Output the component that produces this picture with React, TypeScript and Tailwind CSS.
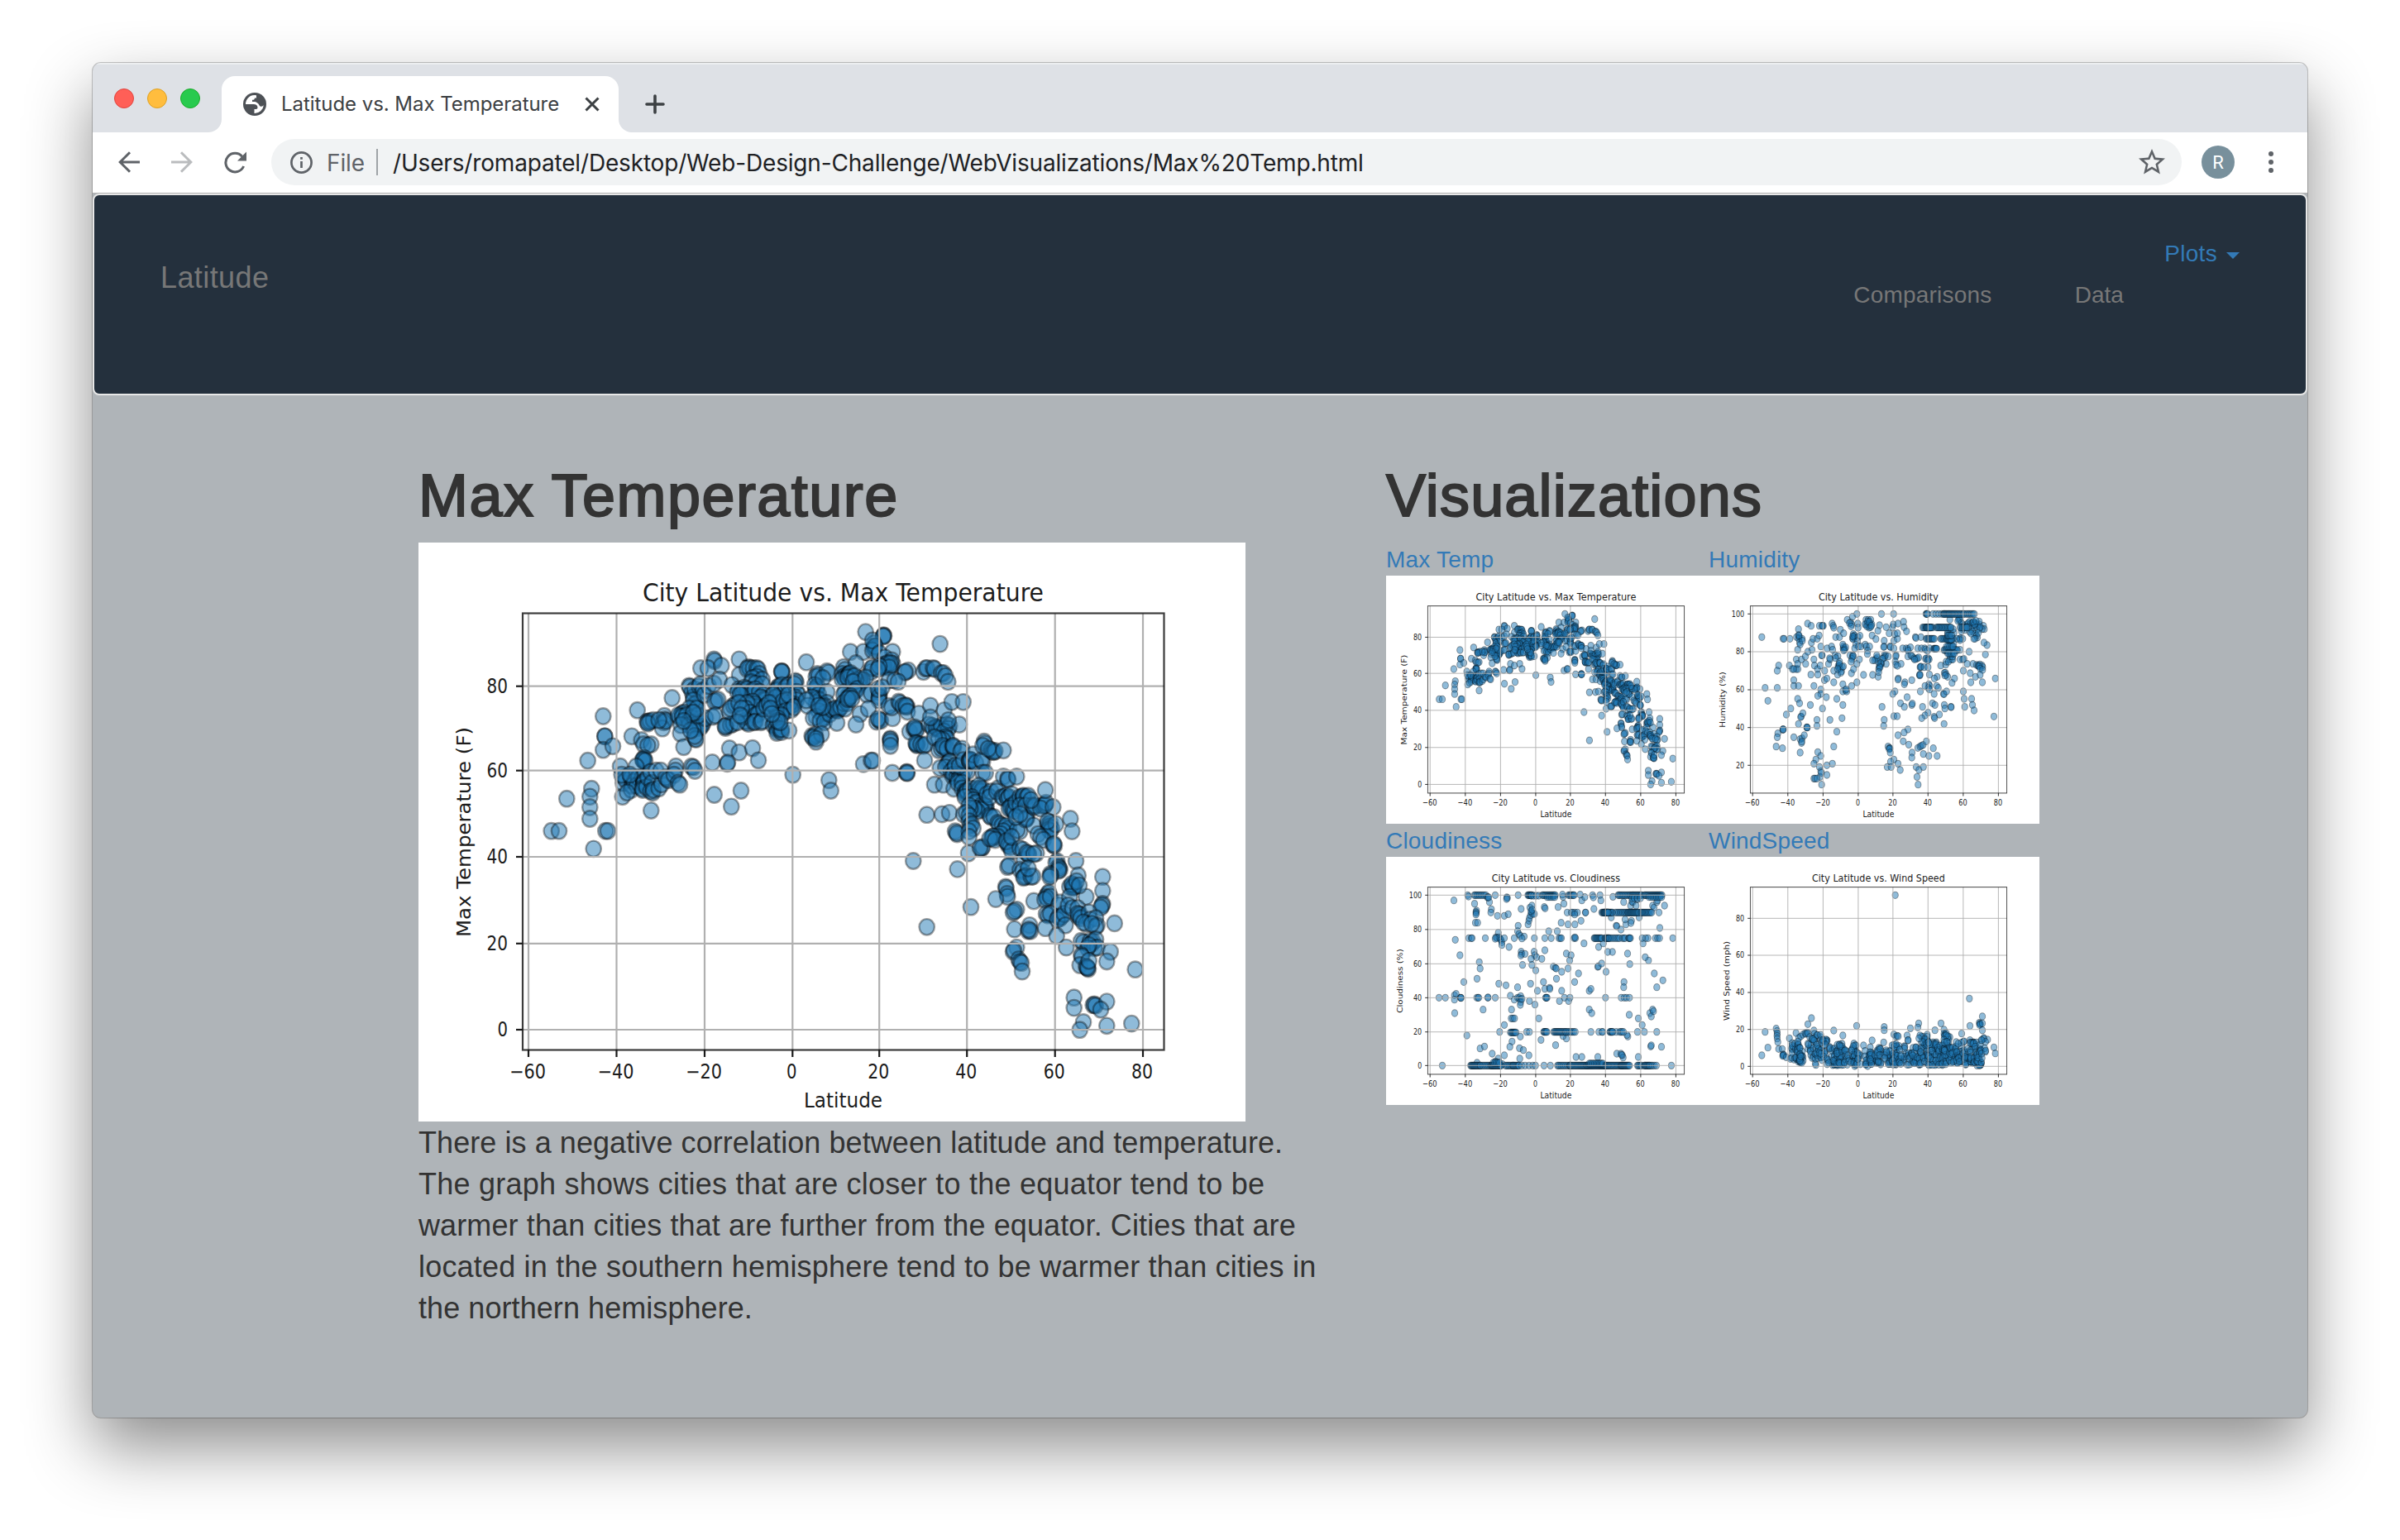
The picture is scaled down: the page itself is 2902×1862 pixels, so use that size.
import React from "react";

type Point = [number, number];

/* ---------- scatter data, in the 1000 x 700 space of a figure ---------- */

const parse = (s: string, ox: number, oy: number, sx: number, sy: number): Point[] =>
  s
    .trim()
    .split(/\s+/)
    .map((p) => {
      const [x, y] = p.split(",").map(Number);
      return [(x - ox) / sx, (y - oy) / sy] as Point;
    });

/* Evenly spaced runs: "from,to,row,count" */
const runs = (s: string, ox: number, oy: number, sx: number, sy: number): Point[] =>
  s
    .trim()
    .split(/\s+/)
    .flatMap((r) => {
      const [a, b, y, n] = r.split(",").map(Number);
      return Array.from({ length: n }, (_, i) => {
        const wobble = Math.sin(i * 12.9 + a) * 0.35;
        const x = n > 1 ? a + ((b - a) * Math.min(Math.max(i + wobble, 0), n - 1)) / (n - 1) : a;
        return [(x - ox) / sx, (y - oy) / sy] as Point;
      });
    });

const tempWest = `328,378 334,451 334,451 328,500 363,487 272,539 286,641 280,670 280,708 280,750 196,677 140,794 168,794 337,794 345,794 293,859 452,356 432,451 502,720 578,312
487,398 492,398 498,396 510,392 490,404 550,377 552,390 548,400 543,422 555,395 530,392 467,465 475,480 502,480 490,484
474,538 474,538 476,530 471,536 480,540 448,560 390,560 398,670 405,600 400,620 410,610 428,600 430,600 432,630 430,645 440,615 455,600 450,630 470,600 475,615 474,625 476,618 470,640 472,645 485,635 490,600 500,580 505,620 500,650 508,655 510,645 530,640 540,625 520,575 537,575 560,605 555,600 565,610 592,560 590,575 585,590 600,620 606,626 648,560 655,563 661,576 415,655 395,590 425,590
640,268 642,272 650,290 655,310 660,280 676,270 680,262 690,285 668,330 665,345 660,335 655,320 640,350 615,368 612,372 620,365 605,380 600,375 615,380 630,375 640,395 650,385 660,400 665,410 680,410 690,405 685,415 678,420 700,385 640,410 655,425 672,375 610,410 608,440 620,490 662,460 665,462 660,450 668,350 655,365 645,430 620,395 695,300 710,268 730,260
682,204 730,172 732,178 708,204 757,195 750,245 821,172 822,228 795,265 738,322 732,325 745,318 725,380 735,375 786,495 821,509 870,494 891,538 724,546 778,550 780,546 772,420 775,412 790,410 800,405 770,415 785,360 800,340 808,335 790,350 731,663 793,706 828,648
855,200 860,204 850,206 872,204 885,204 890,208 895,225 885,235 870,240 905,245 865,255 880,260 905,262 820,280 830,285 835,290 840,275 850,280 870,285 875,290 880,280 815,290 825,300 895,290 910,300 912,315 915,320 900,310 875,335 880,335 882,345 860,340 870,325 850,330 845,350 860,365 880,375 890,370 850,400 845,395 855,405 835,380 875,400 880,398 900,400 905,395 820,330 830,350 815,400 825,375 910,350 920,340
976,215 977,218 975,216 960,275 962,280 965,270 958,285 975,265 985,290 970,300 990,275 1000,265 1025,250 1028,255 1022,262 1030,290 1035,300 1025,310 1030,320 1020,335 1010,340 1000,345 1005,330 990,340 985,350 970,355 965,360 968,345 960,365 975,365 955,350 950,340 940,330 955,310 945,300 980,325 995,320 1000,300 990,360 1010,355 1020,345 975,375 960,385 950,400 945,410 955,420 960,430 958,438 968,425 975,435 975,425 1002,430 960,395 970,400 930,330 935,350 940,370
1065,182 1105,225 1100,235 1110,230 1100,275 1098,280 1102,285 1105,270 1095,265 1110,300 1105,315 1115,320 1100,330 1085,310 1070,340 1065,320 1140,215 1145,220 1125,240 1140,290 1140,330 1130,340 1120,350 1125,370 1130,380 1128,385 1135,365 1110,360 1100,380 1090,385 1115,395 1130,400 1150,370 1160,355 1175,355 1180,358 1185,350 1170,350 1190,345 1176,402 1085,450 1095,452 1098,445 1088,455 1120,443 1100,470 1100,460 1147,610 1154,648 1016,590 1125,345 1110,340
1200,200 1205,210 1195,225 1200,235 1210,230 1215,235 1220,225 1205,245 1195,245 1220,310 1215,305 1210,320 1205,290 1200,300 1200,330 1215,330 1205,350`;

const tempEast = `80,70 145,82 147,84 144,85 350,112 25,140 72,140 178,140 45,180 110,110 112,122 110,128 115,120 105,135 105,100 130,145 150,160 175,170 178,182 172,190 145,185 147,190 142,195 160,180 170,180 165,195 100,200 100,210 105,195 130,190 125,200 20,220 30,225 25,215 15,230 60,235 65,245 60,250 55,255 70,240 45,240 40,225 35,245 50,270 40,280 20,300 25,295 15,305 80,230
30,305 235,205 222,212 225,210 165,240 185,240 198,245 290,210 298,198 303,197 325,197 330,200 355,215 362,215 370,225 379,245 85,290 100,285 130,280 130,295 128,300 128,310 125,270 140,265 60,358 45,395 90,340 120,385 130,380 135,382 125,375 178,373 165,330 175,335 200,315 205,320 215,330 230,330 228,333 225,328 232,350 273,357 315,329 365,345 393,316 434,316 240,420 255,410 262,412 265,415 258,405 265,465 268,462 266,468 262,460 280,465 290,470 298,465 310,395 320,400 325,410 340,408 345,410 350,408 335,405 355,400 375,395 385,400 380,410 365,420 370,440 375,445 360,450 345,445 330,440 420,395 170,445 169,448 170,455 170,470 72,534 100,522 105,522 177,565 228,564 230,562 231,566 294,521 345,485 355,480 365,475 360,470 375,480 395,472 400,475 398,470 430,480 425,490 380,530 375,535 385,525 350,548 370,545 330,606 362,606 315,370 380,380
400,550 390,560 395,575 400,570 410,580 420,570 425,575 430,580 428,572 415,590 440,560 450,560 405,540 420,540 435,520 455,520 460,522 458,518 457,524 462,520 470,500 480,530 505,525 500,520 505,565 515,565 510,455 512,462 505,470 535,485 540,490 545,492 550,488 580,486 525,480
400,620 415,600 430,600 430,620 440,630 445,635 450,632 440,640 448,628 460,620 480,620 490,625 495,620 500,630 505,622 490,610 465,650 440,650 470,660 480,670 490,690 500,680 510,685 515,688 518,684 512,680 500,695 485,700 475,690 460,690 455,680 520,640 535,630 530,650 560,620 555,630
302,712 357,710 384,705 435,710 445,705 455,715 405,770 412,780 410,775 455,735 460,750 465,745 470,760 455,770 455,790 453,847 500,830 505,825 495,828 253,874 413,903 302,1106 462,1036
530,715 535,720 545,720 560,740 565,745 575,750 590,755 595,765 600,760 590,750 580,770 570,780 560,790 540,790 538,795 542,788 530,795 550,800 595,810 600,815 598,820 605,825 590,805 610,840 640,770 630,765 610,790
580,578 595,585 597,588 628,578 575,650 580,652 590,645 595,655 600,650 610,640 605,685 610,680 608,690 600,690 615,695 620,700 625,670 640,650 650,648 655,650 652,645 665,650 670,645 640,680 660,680 665,725 663,722 660,728 685,680 690,685 695,680 720,680 728,680 732,677 735,670 715,690 732,625 760,685 625,720 640,710 690,750 680,660
740,745 745,750 750,740 748,755 755,760 745,765 750,770 770,745 740,735 705,780 715,790 725,800 760,818 765,820 763,815 823,726 829,770
640,830 650,835 655,870 670,848 672,852 665,845 700,847 690,850 595,895 600,890 640,905 650,910 655,930 660,928 653,933 680,930 687,928 670,900 775,875 770,880 780,895 785,905 782,900 780,908 843,874 750,920 752,925 748,930 851,925 940,930 940,979 880,1000 588,965 590,970 593,990 595,1000 552,1008 690,1015 740,990 745,985 735,1000 738,1005 730,1010 750,1000 780,1030 785,1020 820,965 830,960 835,965 838,962 832,968 828,955 845,945 855,960 820,1000 940,1025 938,1030 933,1038 628,1045 615,1055 620,1050 735,1060 742,1065 750,1060 780,1070 785,1075 790,1070 775,1080 800,1060 815,1030 830,1040 850,1040 855,1065 852,1070 858,1062 850,1060 860,1075 890,1055 895,1080 880,1095 870,1090 915,1075 920,1100 915,1105 900,1095 983,1093 620,1114 675,1100 670,1120 678,1120 672,1115 732,1110 805,1100 773,1137 808,1178 628,1178 615,1192 618,1188 635,1220 640,1228 645,1232 648,1262 862,1155 870,1160 895,1155 900,1165 905,1158 915,1150 910,1180 920,1178 885,1180 890,1170 968,1193 862,1205 865,1210 955,1227 857,1240 880,1245 885,1250 888,1253 884,1248 890,1225 1058,1255 836,1354 836,1390 905,1380 910,1378 914,1382 955,1368 933,1396 870,1440 857,1467 955,1453 1045,1445`;

const temperature: Point[] = [
  ...parse(tempWest, -342, -252, 3, 3),
  ...parse(tempEast, -1542, -243.9, 3, 2.904),
];

const humidity: Point[] = [
  ...parse(
    `211,391 223,575 233,622 267,575 272,494 267,513 288,397 292,397 313,397 311,494 300,672 316,650 327,547 327,568 344,568 341,615 348,631 344,706 322,507 336,507 342,507 327,507 336,472 341,488 355,472 370,488 369,461 378,444 393,437 377,342 390,350 344,362 344,384 337,391 347,391 345,397 357,397 348,411 350,418 341,437 358,404 346,385 391,411 397,397 412,397 419,385 425,425 420,350 431,350 434,350 430,350 430,457 428,457 400,472 402,494 413,507 423,494 414,527 389,527 439,513 400,568 425,581 425,597 414,604 387,637 431,650 445,609 438,547 447,541 448,432 464,425 468,437 453,488 459,472 457,468 477,457 487,460 479,467 466,342 470,350 472,357 479,391 493,391 496,364 508,377 472,513 486,527 488,495 492,494 490,500 493,480 495,505 500,515 503,500 507,497 492,488 498,520 486,507 506,432 510,432 507,425 505,418 512,436 515,428 508,439 472,555 505,562 505,588 515,584 519,588 517,580 537,568 556,555 536,522 544,507 556,488 565,472 483,615 505,637 502,685 458,691 411,691 411,713 483,734 472,788 354,679 352,681 360,667 287,727 288,725 289,726 269,740 267,754 263,788 286,794 327,754 350,761 357,758 365,747 355,775 356,770 350,810 375,719 374,718 376,719 414,808 425,822 407,835 400,850 420,862 425,878 422,898 427,883 447,856 467,850 447,891 400,904 404,904 411,904 428,926
521,328 540,317 556,307 533,338 537,345 529,340 535,352 559,342 560,357 543,380 543,390 540,395 545,392 542,398 547,385 541,388 560,391 567,386 558,406 552,418 548,432 562,425 570,425 586,418 590,425 602,425 595,440 594,452 531,457 541,457 540,463 538,470 543,460 535,480 645,307 689,307 589,328 597,328 606,328 600,340 590,345 604,345 598,350 610,345 585,345 600,357 592,352 605,355 595,335 601,335 608,350 580,528 613,528 633,535 611,385 625,398 632,368 638,348 662,355 673,377 685,355 688,345 705,342 725,335 727,355 736,370 655,404 690,404 703,397 693,380 703,377 655,425 653,427 676,425 678,427 690,432 722,432 660,457 655,457 657,463 653,468 648,470 670,461 698,457 697,461 695,480 697,491 716,488 703,495 662,488 645,488 642,490 643,485 638,495 637,500 635,507 640,500 633,480 625,470 630,465 620,475 613,475 628,457 635,518
706,541 705,545 755,547 730,555 728,562 694,588 686,597 738,609 714,631 728,644 755,637 757,632 647,644 655,691 653,713 690,678 702,678 741,726 727,737 705,747 724,769 744,781 669,788 674,793 676,795 673,797 677,810 690,835 678,843 705,850 666,862 680,862 713,873 756,810 755,828 777,793 785,788 790,785 796,782 808,769 797,815 833,794 817,822 847,822 771,862 781,873 797,862 774,898 778,926
735,432 741,434 750,428 742,440 741,461 752,457 757,461 763,468 770,470 775,468 780,465 765,472 768,391 770,394 788,391 777,432 790,432 802,432 805,436 812,440 820,432 805,470 808,468 815,468 818,472 813,475 787,500 785,500 788,498 800,500 814,500 783,528 784,530 785,527 819,527 847,535 837,541 860,494 878,491 880,480 873,521 877,520 880,528 885,535 875,530 901,557 910,541 845,568 851,575 817,562 820,568 803,568 815,575 819,581 786,588 836,597 870,597 872,598 881,588 794,644 830,631 839,637 873,637 875,650 897,644 898,645 814,665 803,675 791,685 855,672 836,680 838,685 872,706
893,472 900,472 888,480 904,472 895,460 903,461 930,472 940,472 944,470 956,488 977,488 930,437 963,444 942,513 967,522 986,535 969,555 1011,555 942,588 945,615 972,615 947,644 975,637 981,657 1053,679 1058,541 1022,454 1028,420 1017,411 990,492 995,494 998,495 1002,490 1010,494 1012,500 1000,498 1003,505 1012,510 1003,528
893,328 925,328 928,325 930,330 922,332 935,340 940,345 945,350 950,355 938,362 935,370 948,365 955,345 960,340 965,335 970,342 975,340 980,338 985,340 990,345 978,350 985,352 995,350 1000,345 1000,335 1015,350 1018,362 1010,362 1000,360 990,365 970,362 975,370 965,372 960,355 985,380 990,385 993,392 985,397 980,397 970,378 997,375 1003,355 983,345 978,335 988,332 940,397 928,397 932,395 930,402 918,397 908,375 895,368 905,362 885,370 885,380 893,405 907,415 880,395`,
    18, 168, 1.2, 1.2857,
  ),
  ...runs(
    `806,812,307,4 830,870,307,5 872,892,307,8 895,945,307,14 950,982,307,7 793,832,356,10 808,824,356,7 845,897,356,14 930,955,356,7 806,838,397,9 860,905,397,11 882,900,400,6 835,845,433,6 872,920,438,14 885,910,450,6 880,905,425,6 885,900,385,4`,
    18, 168, 1.2, 1.2857,
  ),
];

const cloudiness: Point[] = [
  ...parse(
    `294,296 299,439 316,495 240,649 263,649 252,895 296,640 302,635 296,656 318,649 319,649 320,650 297,705 330,592 341,786 344,277 347,282 369,308 376,333 374,338 375,342 374,347 372,377 380,377 348,433 357,433 360,433 386,520 389,543 378,580 408,433 430,328 423,302 428,340 452,352 477,352 491,346 377,649 382,649 384,649 417,649 418,648 444,649 400,692 389,833 405,826 433,852 477,858 455,870 445,880 486,285 488,287 485,291 527,277 444,277 538,327 527,388 525,408 530,418 535,425 549,427 541,434 513,433 586,433 455,413 446,430 450,432 458,430 462,435 465,440 468,448 468,458 477,433 444,435 494,465 538,482 540,490 537,496 552,490 585,482 587,495 594,502 613,508 624,477 574,508 577,530 543,530 591,550 457,598 483,604 525,611 572,598 597,624 499,642 513,656 525,649 530,650 536,643 536,655 536,665 535,675 541,653 568,661 588,674 503,692 502,724 508,724 514,724 602,724 477,748 460,773 558,773 568,773 535,790 505,808 497,827 532,832 546,839 533,870 566,858 610,802 663,821
563,383 566,370 568,360 572,350 575,340 570,322 577,315 580,345 586,345 574,335 578,330 622,320 625,325 672,320 693,308 683,377 708,383 733,383 755,370 705,340 720,340 725,340 733,340 742,340 732,347 771,340 772,340 802,327 758,296 769,284 690,283 688,275 752,275 797,277 800,285 824,277 827,296 871,283 638,408 669,408 624,433 647,433 675,433 680,433 684,433 730,433 735,433 733,430 766,452 702,489 719,495 714,514 655,536 662,541 665,543 685,555 708,543 666,580 746,561 619,592 732,592 624,617 641,613 642,617 685,624 785,624 791,617 816,537 818,535 830,525 846,555 819,465 836,452 852,483 869,483 924,489 932,527 911,592 910,611 695,649 715,649 677,661 710,661 844,649 901,649 912,649 920,649 931,649 785,692 794,705 930,711 963,724 977,748 1005,705 1010,717 1015,692 1018,698 1030,611 1052,586 1021,561 1000,514 988,502 980,452 1041,396 1088,433 1058,315 1038,340 977,433 990,433 998,433 1025,433 1033,433 1040,433 883,388 885,390 900,402 918,383 938,370 936,378 915,365 910,302 865,358 966,358 935,315 940,300 943,302 955,315 960,292 1015,315 1020,322 1030,302 1033,296 702,797 690,788 737,864 758,864 816,864 885,852 900,852 905,858 908,866 902,856 963,864 1008,826 1010,822 1047,827 791,773 820,773 832,773 833,773 883,773 925,790 922,784 960,773 985,773 1030,773 621,895 644,895 1083,895 628,649 630,649 627,649 632,649 378,885 470,890`,
    48, 138, 1.2, 1.2857,
  ),
  ...runs(
    `368,410,277,9 415,420,285,3 562,578,277,7 575,605,279,4 615,662,277,13 630,660,284,5 710,730,277,7 890,935,277,12 940,975,277,12 985,1050,277,20 1000,1048,284,8 940,975,288,4 830,870,340,16 838,855,340,8 880,925,340,10 925,965,340,16 970,1012,340,12 803,830,433,10 842,858,433,8 862,895,433,6 905,915,433,3 928,935,433,4 498,520,775,8 620,632,773,6 655,700,773,14 700,736,773,8 860,870,773,6 895,910,773,4 354,390,895,14 390,430,895,9 430,465,895,14 435,460,885,6 480,510,895,7 508,530,895,8 540,590,895,5 670,715,895,10 715,775,895,18 775,845,895,26 785,835,888,12 845,905,895,18 900,932,895,12 960,975,895,5 985,1005,895,9 1010,1030,895,4`,
    48, 138, 1.2, 1.2857,
  ),
];

/* Low wind speeds form one dense band; its envelope is sampled per latitude. */
const windBand = (): Point[] => {
  let seed = 20117;
  const rnd = () => {
    seed = (seed * 16807) % 2147483647;
    return seed / 2147483647;
  };
  // latitude slot start, end, highest row, lowest row, count
  const slots = [
    [312, 330, 812, 878, 9], [330, 348, 805, 886, 18], [346, 362, 830, 890, 20], [370, 390, 815, 860, 8],
    [392, 412, 790, 895, 14], [408, 428, 780, 868, 17], [425, 450, 800, 885, 14], [445, 475, 825, 894, 16],
    [470, 490, 830, 894, 16], [483, 510, 812, 894, 30], [508, 530, 830, 892, 12], [530, 558, 820, 898, 26],
    [556, 580, 830, 892, 8], [585, 605, 828, 895, 16], [600, 630, 845, 892, 20], [625, 650, 830, 894, 20],
    [650, 680, 840, 890, 20], [680, 710, 815, 894, 30], [708, 735, 820, 892, 14], [735, 760, 845, 894, 12],
    [758, 785, 825, 894, 24], [780, 815, 785, 894, 36], [812, 845, 800, 894, 35], [842, 870, 810, 894, 34],
    [866, 895, 780, 892, 36], [890, 920, 825, 886, 25], [915, 945, 805, 892, 30], [943, 970, 810, 892, 20],
    [966, 990, 810, 892, 30], [985, 1008, 830, 896, 20], [1003, 1024, 795, 872, 10],
  ];
  return slots.flatMap(([a, b, top, low, n]) =>
    Array.from({ length: n }, () => {
      const x = a + (b - a) * rnd();
      const y = low - (low - top) * Math.pow(rnd(), 1.15);
      return [(x - 18) / 1.2, (y - 138) / 1.2857] as Point;
    }),
  );
};

const wind: Point[] = [
  ...parse(
    `695,277 964,652 211,858 223,773 233,830 263,761 266,770 267,779 266,787 267,797 269,810 272,835 285,835 288,855 288,858 290,856 287,860 300,865 311,796 335,777 345,795 352,790 360,783 368,778 375,775 372,780 378,778 378,745 391,723 385,792 400,768 402,780 412,785 425,792 447,803 448,805 472,768 505,786 555,751 611,804 655,755 655,767 653,811 580,822 690,782 697,790 702,787 706,789 738,786 741,804 742,803 728,825 730,827 750,760 780,742 777,757 790,790 797,790 811,783 839,767 861,742 872,765 872,780 875,783 877,785 873,788 880,778 893,792 936,779 966,751 966,803 1011,717 1000,740 1002,743 1004,745 1001,748 1011,742 1011,767 1016,795 1030,801 1053,829 1058,851 1022,845 545,815 553,822 548,897 595,897 407,893 405,888 992,895`,
    18, 138, 1.2, 1.2857,
  ),
  ...windBand(),
];

/* ---------- figure ---------- */

type PlotProps = {
  className: string;
  title: string;
  titleWidth: number;
  yLabel: string;
  yLabelWidth: number;
  yLabelX: number;
  yTicks: [string, number][];
  points: Point[];
};

const X_TICKS: [string, number, number][] = [
  ["−60", 133, 44], ["−40", 239.5, 44], ["−20", 346, 44], ["0", 452.3, 12.5],
  ["20", 557.2, 26], ["40", 663.2, 26], ["60", 769.7, 26], ["80", 876, 26],
];

function Plot({ className, title, titleWidth, yLabel, yLabelWidth, yLabelX, yTicks, points }: PlotProps) {
  return (
    <svg className={className} viewBox="0 0 1000 700" preserveAspectRatio="none" fontFamily="'DejaVu Sans', sans-serif" fill="#1c1c1c">
      <rect width="1000" height="700" fill="#ffffff" />
      <g fill="#1f77b4" fillOpacity="0.5" stroke="#000000" strokeOpacity="0.36" strokeWidth="2.4">
        {points.map(([x, y], i) => (
          <ellipse key={i} cx={x.toFixed(1)} cy={y.toFixed(1)} rx="9.2" ry="9.7" />
        ))}
      </g>
      <g stroke="#b0b0b0" strokeWidth="2.2">
        {X_TICKS.map(([t, x]) => (
          <line key={t} x1={x} x2={x} y1="86" y2="613" />
        ))}
        {yTicks.map(([t, y]) => (
          <line key={t} x1="126" x2="902" y1={y} y2={y} />
        ))}
      </g>
      <g stroke="#1a1a1a" strokeWidth="2.2" fill="none">
        {X_TICKS.map(([t, x]) => (
          <line key={t} x1={x} x2={x} y1="613" y2="622" />
        ))}
        {yTicks.map(([t, y]) => (
          <line key={t} x1="118" x2="126" y1={y} y2={y} />
        ))}
        <rect x="126" y="85.5" width="775.5" height="528" strokeOpacity="0.85" />
      </g>
      <text x={513.5 - titleWidth / 2} y="70.5" fontSize="29.5" textLength={titleWidth} lengthAdjust="spacingAndGlyphs">
        {title}
      </text>
      {X_TICKS.map(([t, x, w]) => (
        <text key={t} x={x - w / 2 - 1} y="648" fontSize="24" textLength={w} lengthAdjust="spacingAndGlyphs">
          {t}
        </text>
      ))}
      {yTicks.map(([t, y]) => {
        const w = t.length * 13 - 0.5;
        return (
          <text key={t} x={108 - w} y={y + 8} fontSize="24" textLength={w} lengthAdjust="spacingAndGlyphs">
            {t}
          </text>
        );
      })}
      <text x="466" y="682.5" fontSize="24" textLength="95" lengthAdjust="spacingAndGlyphs">
        Latitude
      </text>
      <text
        transform={`translate(${yLabelX} ${350 + yLabelWidth / 2}) rotate(-90)`}
        fontSize="23"
        textLength={yLabelWidth}
        lengthAdjust="spacingAndGlyphs"
      >
        {yLabel}
      </text>
    </svg>
  );
}

const PERCENT_TICKS: [string, number][] = [["0", 588.8], ["20", 494], ["40", 397.5], ["60", 301.8], ["80", 205], ["100", 108]];
const HUMIDITY_TICKS: [string, number][] = [["20", 535], ["40", 428.6], ["60", 322], ["80", 214.7], ["100", 108]];
const TEMP_TICKS: [string, number][] = [["0", 589], ["20", 484.8], ["40", 380], ["60", 275.7], ["80", 173.7]];
const WIND_TICKS: [string, number][] = [["0", 591], ["20", 487], ["40", 382.7], ["60", 277.7], ["80", 173.4]];

const tempPlot = {
  title: "City Latitude vs. Max Temperature", titleWidth: 485,
  yLabel: "Max Temperature (F)", yLabelWidth: 254, yLabelX: 63,
  yTicks: TEMP_TICKS, points: temperature,
};
const humidityPlot = {
  title: "City Latitude vs. Humidity", titleWidth: 362,
  yLabel: "Humidity (%)", yLabelWidth: 158, yLabelX: 49,
  yTicks: HUMIDITY_TICKS, points: humidity,
};
const cloudPlot = {
  title: "City Latitude vs. Cloudiness", titleWidth: 388,
  yLabel: "Cloudiness (%)", yLabelWidth: 181, yLabelX: 51,
  yTicks: PERCENT_TICKS, points: cloudiness,
};
const windPlot = {
  title: "City Latitude vs. Wind Speed", titleWidth: 402,
  yLabel: "Wind Speed (mph)", yLabelWidth: 224, yLabelX: 63,
  yTicks: WIND_TICKS, points: wind,
};

/* ---------- browser chrome ---------- */

function TabStrip() {
  return (
    <div className="flex h-[84px] items-end bg-[#dee1e6] shadow-[inset_0_2px_0_#eceef0]">
      <div className="flex h-[84px] w-[140px] items-start gap-4 pt-[31px] pl-[26px]">
        <span className="size-6 rounded-full border border-[#e0443e] bg-[#ff5f57]" />
        <span className="size-6 rounded-full border border-[#dea123] bg-[#ffbd3e]" />
        <span className="size-6 rounded-full border border-[#1aab29] bg-[#28ca4e]" />
      </div>
      <svg className="size-4" viewBox="0 0 16 16"><path d="M16 0v16H0A16 16 0 0 0 16 0z" fill="#fff" /></svg>
      <div className="flex h-[68px] w-[480px] items-center rounded-t-[16px] bg-white pl-[26px]">
        <svg className="size-[28px]" viewBox="0 0 28 28">
          <circle cx="14" cy="14" r="14" fill="#4d5156" />
          <path
            d="M16 3.2A11 11 0 0 0 3 14h9.5c3 0 5 1.3 5 4.3 0 1-.8 1.7-1.800 1.700h-2.200v4.900A11 11 0 0 0 24.900 15c-1.400 2.300-4.300 2.200-5.400.2-.9-1.900-2.600-3.400-5-4.200H11V8.800c2.600 0 2.700-.6 2.900-2.400H16z"
            fill="#fff"
          />
        </svg>
        <span className="ml-[18px] w-[337px] font-['Inter'] text-[24px] tracking-[-0.05px] whitespace-nowrap text-[#3c4043]">
          Latitude vs. Max Temperature
        </span>
        <svg className="ml-[30px] size-[18px]" viewBox="0 0 18 18" stroke="#3c4043" strokeWidth="3">
          <path d="M1.500 1.500l15 15M16.500 1.500l-15 15" />
        </svg>
      </div>
      <svg className="size-4" viewBox="0 0 16 16"><path d="M0 0v16h16A16 16 0 0 1 0 0z" fill="#fff" /></svg>
      <svg className="mb-[22px] ml-[16px] size-[24px]" viewBox="0 0 24 24" stroke="#3c4043" strokeWidth="3.6" strokeLinecap="round">
        <path d="M12 2v20M2 12h20" />
      </svg>
    </div>
  );
}

function Toolbar() {
  return (
    <div className="flex h-[73px] items-start bg-white pt-2">
      <div className="flex h-14 w-[216px] items-center pl-[31px]">
        <svg className="size-[26px]" viewBox="0 0 26 26" fill="none" stroke="#5f6368" strokeWidth="3">
          <path d="M26 13H2.500M14 1.200L2.200 13 14 24.800" />
        </svg>
        <svg className="ml-[38px] size-[26px]" viewBox="0 0 26 26" fill="none" stroke="#babcbe" strokeWidth="3">
          <path d="M0 13h23.500M12 1.200L23.800 13 12 24.800" />
        </svg>
        <svg className="ml-[38px] size-[27px]" viewBox="0 0 27 27" fill="none" stroke="#5f6368" strokeWidth="3">
          <path d="M23.600 18A11.300 11.300 0 1 1 21.800 6.200" />
          <path d="M27 .5v11H16z" fill="#5f6368" stroke="none" />
        </svg>
      </div>
      <div className="flex h-14 w-[2310px] items-center rounded-full bg-[#f1f3f4] pr-[20px] pl-[23px]">
        <svg className="size-[27px]" viewBox="0 0 27 27" fill="none" stroke="#5f6368" strokeWidth="2.7">
          <circle cx="13.5" cy="13.5" r="12.1" />
          <path d="M13.500 12v8M13.500 7v2.800" />
        </svg>
        <span className="ml-[17px] w-[60px] pt-px font-['Inter'] text-[28px] tracking-[-0.1px] text-[#5f6368]">File</span>
        <span className="h-8 w-[2px] bg-[#9fa3a7]" />
        <span className="ml-[18px] grow pt-px font-['Inter'] text-[28px] tracking-[-0.17px] whitespace-nowrap text-[#202124]">
          /Users/romapatel/Desktop/Web-Design-Challenge/WebVisualizations/Max%20Temp.html
        </span>
        <svg className="size-[32px]" viewBox="2 2 20 20" fill="#5f6368">
          <path d="M22 9.240l-7.190-.62L12 2 9.190 8.630 2 9.240l5.460 4.730L5.820 21 12 17.270 18.180 21l-1.630-7.030L22 9.240zM12 15.400l-3.760 2.270 1-4.280-3.320-2.880 4.380-.38L12 6.100l1.710 4.040 4.380.38-3.320 2.880 1 4.280L12 15.400z" />
        </svg>
      </div>
      <div className="ml-6 flex h-14 items-center">
        <span className="flex size-10 items-center justify-center rounded-full bg-[#78909c] font-['Roboto'] text-[22px] text-white">R</span>
        <div className="ml-[41px] flex flex-col gap-1">
          <span className="size-[6px] rounded-full bg-[#5f6368]" />
          <span className="size-[6px] rounded-full bg-[#5f6368]" />
          <span className="size-[6px] rounded-full bg-[#5f6368]" />
        </div>
      </div>
    </div>
  );
}

/* ---------- page ---------- */

function NavBar() {
  return (
    <nav className="flex h-[244px] items-start rounded-[8px] border-2 border-[#e7e7e7] bg-[#24303d] text-[28px] leading-[40px] text-[#777777]">
      <a className="mt-[80px] ml-[80px] text-[36px] tracking-[0.4px]">Latitude</a>
      <a className="mt-[101px] ml-auto w-[267.5px] tracking-[0.2px]">Comparisons</a>
      <a className="mt-[101px] w-[108.5px]">Data</a>
      <a className="mt-[51px] mr-[80px] flex items-center text-[#337ab7]">
        <span className="tracking-[0.3px]">Plots</span>
        <span className="mt-[3px] ml-[11px] border-x-8 border-t-8 border-x-transparent border-t-[#337ab7]" />
      </a>
    </nav>
  );
}

function Thumb({ label, children }: { label: string; children: React.ReactNode }) {
  return (
    <div className="w-[390px]">
      <a className="block h-10 text-[28px] leading-[42px] tracking-[0.2px] text-[#337ab7]">{label}</a>
      {children}
    </div>
  );
}

export default function App() {
  return (
    <div className="h-[1862px] w-[2902px] overflow-hidden bg-white pt-[76px] pl-[112px] font-['Liberation_Sans',sans-serif]">
      <div className="h-[1638px] w-[2678px] overflow-hidden rounded-[10px] bg-[#afb4b8] shadow-[0_0_0_1px_rgba(0,0,0,0.22),0_36px_80px_rgba(0,0,0,0.45)]">
        <TabStrip />
        <Toolbar />
        <div className="h-px bg-[#b2b2b2]" />
        <NavBar />
        <div className="flex pt-[81px] pl-[394px] text-[#333333]">
          <main className="w-[1170px]">
            <h1 className="mb-[17px] h-[80px] text-[72px] leading-[80px] tracking-[1.45px] [-webkit-text-stroke:2px_#333333]">Max Temperature</h1>
            <Plot className="block h-[700px] w-[1000px]" {...tempPlot} />
            <p className="pt-px text-[36px] leading-[50px] whitespace-nowrap">
              <span className="block tracking-[0.07px]">There is a negative correlation between latitude and temperature.</span>
              <span className="block tracking-[0.23px]">The graph shows cities that are closer to the equator tend to be</span>
              <span className="block tracking-[0.12px]">warmer than cities that are further from the equator. Cities that are</span>
              <span className="block tracking-[0.19px]">located in the southern hemisphere tend to be warmer than cities in</span>
              <span className="block tracking-[0.07px]">the northern hemisphere.</span>
            </p>
          </main>
          <aside className="w-[800px]">
            <h1 className="mb-[17px] h-[80px] text-[72px] leading-[80px] tracking-[1.15px] [-webkit-text-stroke:2px_#333333]">Visualizations</h1>
            <div className="flex">
              <Thumb label="Max Temp"><Plot className="block h-[300px] w-[400px] max-w-none" {...tempPlot} /></Thumb>
              <Thumb label="Humidity"><Plot className="block h-[300px] w-[400px] max-w-none" {...humidityPlot} /></Thumb>
            </div>
            <div className="flex">
              <Thumb label="Cloudiness"><Plot className="block h-[300px] w-[400px] max-w-none" {...cloudPlot} /></Thumb>
              <Thumb label="WindSpeed"><Plot className="block h-[300px] w-[400px] max-w-none" {...windPlot} /></Thumb>
            </div>
          </aside>
        </div>
      </div>
    </div>
  );
}
